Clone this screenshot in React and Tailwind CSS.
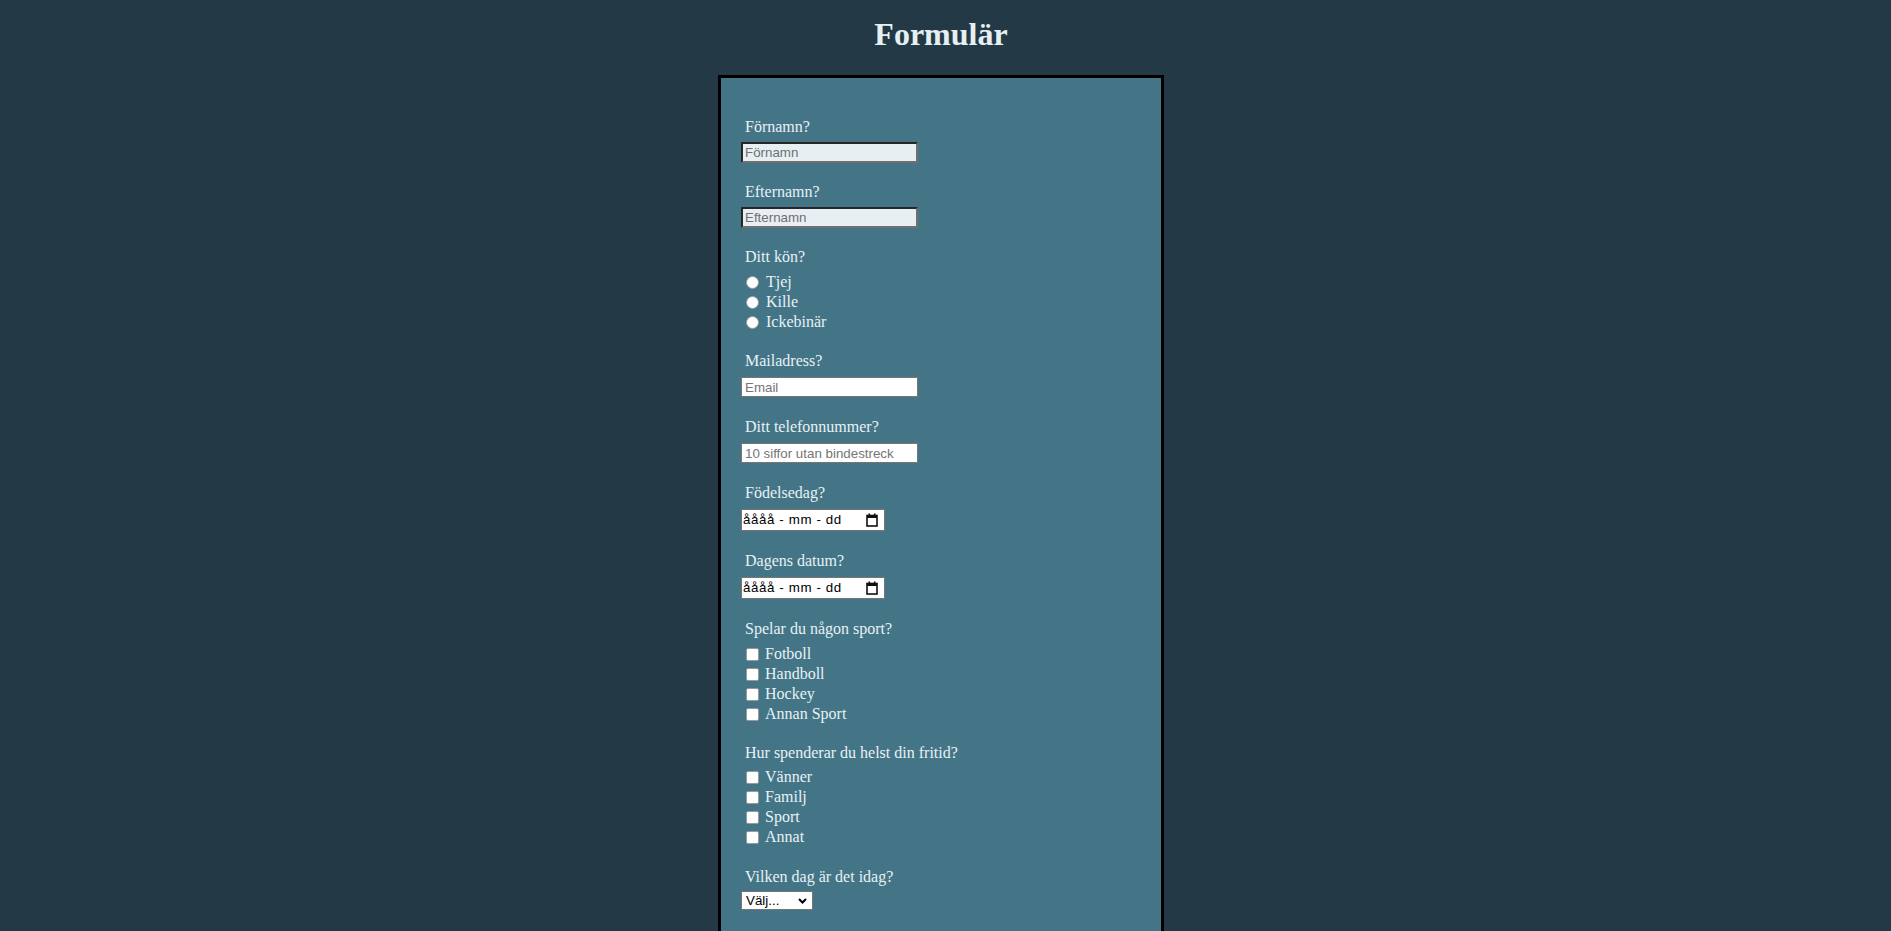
import React from "react";

// Fält: etikett + kontroll med små avstånd
const Field = ({ label, className = "", gap = "mt-[6px]", children }) => (
  <div className={`flex flex-col items-start ${className}`}>
    <label className="pl-[4px] text-[16px] leading-[18px] text-[#e8f1f4]">
      {label}
    </label>
    <div className={`flex flex-col ${gap}`}>{children}</div>
  </div>
);

const insetInput =
  "w-[177px] h-[21px] border-2 border-t-[#262626] border-l-[#262626] border-r-[#707070] border-b-[#707070] bg-[#e8eff2] px-[2px] text-[13.33px] text-black font-['Liberation_Sans',Arial,sans-serif] placeholder:text-[#707070] outline-none";

const plainInput =
  "w-[177px] h-[20px] border border-[#767676] bg-white px-[3px] text-[13.33px] text-black font-['Liberation_Sans',Arial,sans-serif] placeholder:text-[#757575] outline-none";

const Radio = ({ name, label }) => (
  <label className="flex h-[20px] items-center text-[16px] text-[#e8f1f4]">
    <input
      type="radio"
      name={name}
      className="ml-[5px] h-[13px] w-[13px] appearance-none rounded-full border border-[#9a9a9a] bg-white"
    />
    <span className="ml-[7px] leading-[20px]">{label}</span>
  </label>
);

const Check = ({ label }) => (
  <label className="flex h-[20px] items-center text-[16px] text-[#e8f1f4]">
    <input
      type="checkbox"
      className="ml-[5px] h-[13px] w-[13px] appearance-none rounded-[2px] border border-[#9a9a9a] bg-white"
    />
    <span className="ml-[6px] leading-[20px]">{label}</span>
  </label>
);

const CalendarIcon = () => (
  <svg width="12" height="14" viewBox="0 0 12 14" fill="none">
    <rect x="1" y="2.5" width="10" height="10.5" stroke="#111" strokeWidth="1.6" />
    <rect x="1" y="2.5" width="10" height="2.5" fill="#111" />
    <rect x="2.5" y="0.5" width="1.6" height="3" fill="#111" />
    <rect x="7.9" y="0.5" width="1.6" height="3" fill="#111" />
  </svg>
);

const DateField = () => (
  <div className="flex h-[22px] w-[144px] items-center justify-between border border-[#767676] bg-white pl-[1px] pr-[6px] font-['Liberation_Sans',Arial,sans-serif] text-[13.33px] tracking-[0.6px] text-black">
    <span className="whitespace-pre">åååå - mm - dd</span>
    <CalendarIcon />
  </div>
);

export default function App() {
  return (
    <div className="h-[931px] overflow-hidden bg-[#233a46] font-['Liberation_Serif','Times_New_Roman',serif]">
      <div className="flex flex-col items-center pr-[9px]">
        <h1 className="mt-[16px] mb-[22px] text-[32px] font-bold leading-[37px] text-[#e6f0f4]">
          Formulär
        </h1>

        <form className="w-[446px] border-[3px] border-black bg-[#437587] pl-[20px] pt-[40px] pb-[80px]">
          <Field label="Förnamn?">
            <input type="text" placeholder="Förnamn" className={insetInput} />
          </Field>

          <Field label="Efternamn?" className="mt-[20px]">
            <input type="text" placeholder="Efternamn" className={insetInput} />
          </Field>

          <Field label="Ditt kön?" className="mt-[20px]">
            <Radio name="kon" label="Tjej" />
            <Radio name="kon" label="Kille" />
            <Radio name="kon" label="Ickebinär" />
          </Field>

          <Field label="Mailadress?" className="mt-[20px]" gap="mt-[7px]">
            <input type="email" placeholder="Email" className={plainInput} />
          </Field>

          <Field label="Ditt telefonnummer?" className="mt-[21px]" gap="mt-[7px]">
            <input
              type="tel"
              placeholder="10 siffor utan bindestreck"
              className={plainInput}
            />
          </Field>

          <Field label="Födelsedag?" className="mt-[21px]" gap="mt-[7px]">
            <DateField />
          </Field>

          <Field label="Dagens datum?" className="mt-[21px]" gap="mt-[7px]">
            <DateField />
          </Field>

          <Field label="Spelar du någon sport?" className="mt-[21px]">
            <Check label="Fotboll" />
            <Check label="Handboll" />
            <Check label="Hockey" />
            <Check label="Annan Sport" />
          </Field>

          <Field label="Hur spenderar du helst din fritid?" className="mt-[20px]" gap="mt-[5px]">
            <Check label="Vänner" />
            <Check label="Familj" />
            <Check label="Sport" />
            <Check label="Annat" />
          </Field>

          <Field label="Vilken dag är det idag?" className="mt-[21px]" gap="mt-[5px]">
            <div className="relative h-[19px] w-[72px]">
              <select className="block h-[19px] w-[72px] appearance-none border border-[#767676] bg-white pl-[4px] font-['Liberation_Sans',Arial,sans-serif] text-[13.33px] leading-[17px] text-black outline-none">
                <option>Välj...</option>
                <option>Måndag</option>
                <option>Tisdag</option>
                <option>Onsdag</option>
                <option>Torsdag</option>
                <option>Fredag</option>
                <option>Lördag</option>
                <option>Söndag</option>
              </select>
              <svg
                className="pointer-events-none absolute right-[6px] top-[7px]"
                width="9"
                height="6"
                viewBox="0 0 9 6"
                fill="none"
              >
                <path d="M1 1l3.5 3.5L8 1" stroke="#000" strokeWidth="2" />
              </svg>
            </div>
          </Field>
        </form>
      </div>
    </div>
  );
}
